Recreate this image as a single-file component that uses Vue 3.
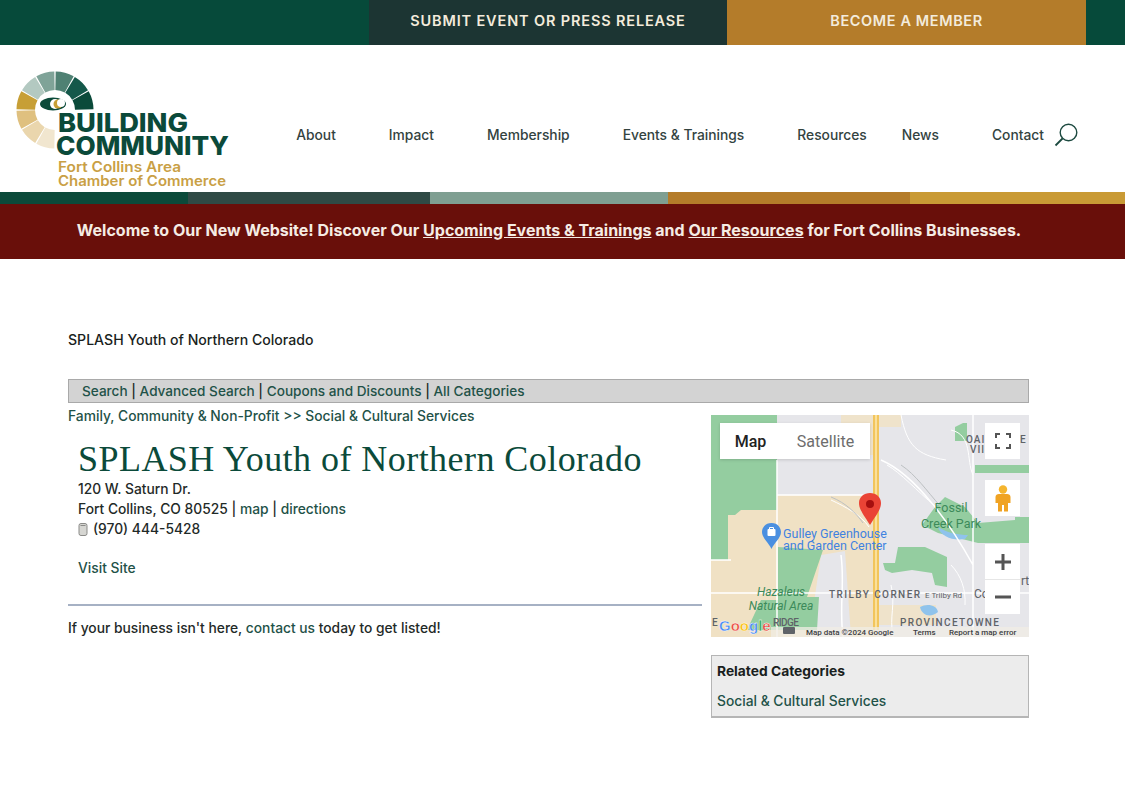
<script setup>
const navItems = [
  { label: 'About' },
  { label: 'Impact' },
  { label: 'Membership' },
  { label: 'Events & Trainings' },
  { label: 'Resources', tight: true },
  { label: 'News' },
  { label: 'Contact', last: true }
]

const stripes = [
  { color: '#0b4a3a', width: 188 },
  { color: '#2f4a45', width: 242 },
  { color: '#7f9f92', width: 238 },
  { color: '#b47c2a', width: 242 },
  { color: '#c99a35', width: 215 }
]

// logo ring, runs counter-clockwise from the right side down to the bottom
const ringColors = ['#0b4a3a', '#14584a', '#4f8173', '#7fa398', '#b3c9c1', '#c79f36', '#dfc07f', '#ead6ad', '#f1e6cf']
const arcPoint = (r, deg) => {
  const a = (deg * Math.PI) / 180
  return `${(55 + r * Math.cos(a)).toFixed(2)} ${(65 - r * Math.sin(a)).toFixed(2)}`
}
const ringSegments = ringColors.map((color, i) => {
  const start = i * 30 + 1
  const end = start + 28
  const d = `M${arcPoint(38.5, start)} A38.5 38.5 0 0 0 ${arcPoint(38.5, end)} L${arcPoint(20, end)} A20 20 0 0 1 ${arcPoint(20, start)} Z`
  return { color, d }
})
</script>

<template>
  <div class="page">
    <div class="top-bar">
      <a class="top-btn dark">SUBMIT EVENT OR PRESS RELEASE</a>
      <a class="top-btn gold">BECOME A MEMBER</a>
    </div>

    <header class="site-header">
      <svg class="logo" width="240" height="147" viewBox="0 0 240 147">
        <path v-for="seg in ringSegments" :key="seg.color" :d="seg.d" :fill="seg.color" />
        <ellipse cx="53" cy="59" rx="13" ry="6.500" fill="#0b4a3a" />
        <circle cx="55" cy="59" r="5" fill="#fff" />
        <circle cx="58" cy="59" r="4.500" fill="#c79f36" />
        <circle cx="61" cy="58" r="4" fill="#fff" />
        <text class="logo-big" x="58" y="87" textLength="130" lengthAdjust="spacingAndGlyphs">BUILDING</text>
        <text class="logo-big" x="56" y="110" textLength="173" lengthAdjust="spacingAndGlyphs">COMMUNITY</text>
        <text class="logo-small" x="58" y="127" textLength="123" lengthAdjust="spacingAndGlyphs">Fort Collins Area</text>
        <text class="logo-small" x="58" y="141" textLength="168" lengthAdjust="spacingAndGlyphs">Chamber of Commerce</text>
      </svg>

      <nav class="main-nav">
        <a
          v-for="item in navItems"
          :key="item.label"
          :class="['nav-link', { tight: item.tight, last: item.last }]"
        >{{ item.label }}</a>
        <svg class="search-icon" width="24" height="24" viewBox="0 0 24 24" fill="none" stroke="#1d4a40">
          <circle cx="14.500" cy="9.500" r="8.300" stroke-width="1.400" />
          <path d="M8.500 15.500 L1.500 22.500" stroke-width="1.800" />
        </svg>
      </nav>
    </header>

    <div class="stripes">
      <span v-for="s in stripes" :key="s.color" :style="{ background: s.color, width: s.width + 'px' }"></span>
    </div>

    <div class="welcome">
      <span>Welcome to Our New Website! Discover Our <u>Upcoming Events &amp; Trainings</u> and <u>Our Resources</u> for Fort Collins Businesses.</span>
    </div>

    <main class="content">
      <p class="page-name">SPLASH Youth of Northern Colorado</p>

      <div class="search-bar">
        <a>Search</a> | <a>Advanced Search</a> | <a>Coupons and Discounts</a> | <a>All Categories</a>
      </div>

      <div class="columns">
        <section class="listing">
          <div class="crumbs"><a>Family, Community &amp; Non-Profit</a> &gt;&gt; <a>Social &amp; Cultural Services</a></div>
          <div class="entry">
            <h1>SPLASH Youth of Northern Colorado</h1>
            <div class="line">120 W. Saturn Dr.</div>
            <div class="line">Fort Collins, CO 80525 | <a>map</a> | <a>directions</a></div>
            <div class="line phone">
              <svg width="10" height="13" viewBox="0 0 10 13">
                <rect x="1" y="0.500" width="8" height="12" rx="2" fill="#d6d6d2" stroke="#8b8b88" />
                <rect x="2.500" y="2" width="5" height="1" fill="#8b8b88" />
              </svg>
              (970) 444-5428
            </div>
            <div class="visit"><a>Visit Site</a></div>
          </div>
          <hr class="divider" />
          <p class="cta">If your business isn't here, <a>contact us</a> today to get listed!</p>
        </section>

        <aside class="side">
          <div class="map">
            <svg class="map-canvas" width="318" height="222" viewBox="0 0 318 222">
              <rect width="318" height="222" fill="#e6e6ea" />
              <path d="M0 95H165V222H0Z" fill="#f0e1c4" />
              <path d="M66 80H165V96H66Z" fill="#f0e1c4" />
              <path d="M130 0H165V40H130Z" fill="#efe3cb" />
              <path d="M168 0H190V12H168Z" fill="#efe3cb" />
              <path d="M168 190H225V210H168Z" fill="#efe3cb" />
              <path d="M110 140L134 136L140 222H98Z" fill="#e6e6ea" />
              <path d="M0 0H66V95H30L24 100H17V145H0Z" fill="#94cda0" />
              <path d="M67 132L112 135L96 182H108L106 215H36L50 185H67Z" fill="#94cda0" />
              <path d="M172 148H184L187 132H214L236 142V172L224 170L221 158L201 155L181 158L174 155Z" fill="#94cda0" />
              <path d="M234 82L254 92L267 108L304 105V128H267L227 118L211 110L224 92Z" fill="#94cda0" />
              <path d="M264 50H318V58H264Z" fill="#94cda0" />
              <path d="M304 102H318V128H304Z" fill="#94cda0" />
              <path d="M244 12L252 8H256V26H244Z" fill="#94cda0" />
              <path d="M227 112C236 118 248 120 257 120L254 124C242 126 230 122 227 112Z" fill="#8fc3ec" />
              <path d="M209 192C216 188 226 190 227 197C220 203 211 201 209 192Z" fill="#8fc3ec" />
              <path d="M66 45V222M66 80H165M0 178H318M170 45C205 60 240 110 262 150M262 0V222M0 145H20M130 140C134 170 128 190 132 222" fill="none" stroke="#fff" stroke-width="1.500" />
              <path d="M190 0C196 30 205 40 235 45M240 15C262 20 255 45 262 60M120 85C135 92 150 100 158 112M176 50C190 58 205 75 225 92M180 170C185 190 178 200 182 222M240 150C250 160 255 175 254 190" fill="none" stroke="#fff" stroke-width="1" />
              <path d="M120 82C135 88 145 98 152 108M190 50C205 60 215 75 230 92" fill="none" stroke="#bcc0c2" stroke-width="1" />
              <path d="M165 0V215" stroke="#f2c55c" stroke-width="6" />
              <path d="M165 0V215" stroke="#fbe09a" stroke-width="2" />
              <text class="map-label park" x="240" y="97" text-anchor="middle">Fossil</text>
              <text class="map-label park" x="240" y="113" text-anchor="middle">Creek Park</text>
              <text class="map-label poi" x="72" y="123">Gulley Greenhouse</text>
              <text class="map-label poi" x="72" y="135">and Garden Center</text>
              <path d="M60.500 108C54 108 51 113 51 117C51 123 58 128 60.500 134C63 128 70 123 70 117C70 113 67 108 60.500 108Z" fill="#4a8fe0" />
              <rect x="56.500" y="114" width="8" height="7" rx="1" fill="#fff" />
              <path d="M58.500 114V112.500H62.500V114" fill="none" stroke="#fff" />
              <text class="map-label nature" x="70" y="181" text-anchor="middle">Hazaleus</text>
              <text class="map-label nature" x="70" y="195" text-anchor="middle">Natural Area</text>
              <text class="map-label area" x="118" y="183" textLength="92">TRILBY CORNER</text>
              <text class="map-label road" x="214" y="183">E Trilby Rd</text>
              <text class="map-label area" x="1" y="211">E</text>
              <text class="map-label area" x="62" y="211" textLength="27">RIDGE</text>
              <text class="map-label area" x="189" y="211" textLength="100">PROVINCETOWNE</text>
              <text class="map-label area" x="255" y="28">OAI</text>
              <text class="map-label area" x="259" y="38">VII</text>
              <text class="map-label area" x="309" y="28">E</text>
              <text class="map-label side-label" x="263" y="183">Co</text>
              <text class="map-label side-label" x="310" y="170">rt</text>
              <path d="M159 110C152 99 148 94 148 88C148 82 153 78 159 78C165 78 170 82 170 88C170 94 166 99 159 110Z" fill="#ea4335" />
              <circle cx="159" cy="89" r="4" fill="#a50e0e" />
              <rect x="60" y="212" width="258" height="10" fill="#f0ece4" opacity="0.75" />
              <text class="google" x="8" y="216"><tspan fill="#4285f4">G</tspan><tspan fill="#ea4335">o</tspan><tspan fill="#fbbc05">o</tspan><tspan fill="#4285f4">g</tspan><tspan fill="#34a853">l</tspan><tspan fill="#ea4335">e</tspan></text>
              <rect x="72" y="212" width="12" height="7" rx="1" fill="#5f6368" />
              <text class="map-fine" x="95" y="220">Map data ©2024 Google</text>
              <text class="map-fine" x="202" y="220">Terms</text>
              <text class="map-fine" x="238" y="220">Report a map error</text>
            </svg>

            <div class="map-types">
              <span class="map-type on">Map</span>
              <span class="map-type">Satellite</span>
            </div>
            <button class="map-btn fullscreen">
              <svg width="16" height="16" viewBox="0 0 16 16" fill="none" stroke="#555" stroke-width="2">
                <path d="M1 5V1H5M11 1H15V5M15 11V15H11M5 15H1V11" />
              </svg>
            </button>
            <button class="map-btn pegman">
              <svg width="16" height="27" viewBox="0 0 16 27">
                <circle cx="8" cy="4.500" r="4.200" fill="#f5b52e" />
                <path d="M4 9H12C14 9 15.500 10 15.500 12V18H13V26.500H9V20H7V26.500H3V18H0.500V12C0.500 10 2 9 4 9Z" fill="#f0a323" />
              </svg>
            </button>
            <div class="zoom-ctrl">
              <button class="zoom-btn">
                <svg width="16" height="16" viewBox="0 0 16 16"><path d="M6.500 0H9.500V6.500H16V9.500H9.500V16H6.500V9.500H0V6.500H6.500Z" fill="#555" /></svg>
              </button>
              <button class="zoom-btn">
                <svg width="16" height="16" viewBox="0 0 16 16"><rect y="6.500" width="16" height="3" fill="#555" /></svg>
              </button>
            </div>
          </div>

          <div class="related">
            <h3>Related Categories</h3>
            <a>Social &amp; Cultural Services</a>
          </div>
        </aside>
      </div>
    </main>
  </div>
</template>

<style>
html, body {
  margin: 0;
  background: #fff;
}
</style>

<style scoped>
.page {
  width: 1125px;
  height: 805px;
  overflow: hidden;
  font-family: Inter, "Liberation Sans", sans-serif;
  font-size: 13.8px;
  font-weight: 500;
  color: #1f2a28;
  background: #fff;
}

a {
  color: #1f5248;
  text-decoration: none;
}

.top-bar {
  height: 45px;
  padding-left: 369px;
  display: flex;
  background: #064a3a;
}

.top-btn {
  width: 358px;
  height: 45px;
  padding-bottom: 4px;
  box-sizing: border-box;
  display: flex;
  align-items: center;
  justify-content: center;
  color: #f3ebdc;
  font-size: 14.5px;
  font-weight: 600;
  letter-spacing: 0.6px;
}

.top-btn.dark { background: #1c3533; letter-spacing: 0.85px; }
.top-btn.gold { background: #b47c2a; width: 359px; }

.site-header {
  height: 147px;
  display: flex;
  justify-content: space-between;
  align-items: center;
}

.logo {
  flex: none;
}

.logo-big {
  font-family: Inter, "Liberation Sans", sans-serif;
  font-size: 26px;
  font-weight: 800;
  fill: #0b4a3a;
}

.logo-small {
  font-family: Inter, "Liberation Sans", sans-serif;
  font-size: 14px;
  font-weight: 600;
  fill: #c99f45;
}

.main-nav {
  display: flex;
  align-items: center;
  padding-right: 47px;
  margin-top: 32px;
}

.nav-link {
  margin-right: 53px;
  font-size: 13.8px;
  color: #33433f;
}

.nav-link.tight { margin-right: 35px; }
.nav-link.last { margin-right: 10px; }

.search-icon {
  flex: none;
}

.stripes {
  display: flex;
  height: 12px;
}

.welcome {
  height: 55px;
  padding: 0 27px 4px 0;
  box-sizing: border-box;
  display: flex;
  align-items: center;
  justify-content: center;
  background: #690f0a;
  color: #f5ece4;
  font-size: 16px;
  font-weight: 700;
}

.content {
  padding: 72px 96px 0 68px;
}

.page-name {
  margin: 0 0 30px;
  font-size: 14.1px;
  line-height: 18px;
  color: #1a1f1e;
}

.search-bar {
  height: 24px;
  line-height: 23px;
  padding-left: 13px;
  box-sizing: border-box;
  background: #d3d3d3;
  border: 1px solid #a9a9a9;
  font-size: 13.6px;
}

.columns {
  display: flex;
  justify-content: space-between;
}

.listing {
  width: 634px;
}

.crumbs {
  margin-top: 4px;
  line-height: 18px;
  color: #1f5248;
}

.entry {
  padding: 14px 0 0 10px;
}

h1 {
  margin: 0;
  font-family: "Liberation Serif", serif;
  font-size: 36px;
  line-height: 40px;
  font-weight: 400;
  letter-spacing: 0.45px;
  color: #0b4a3a;
}

.line {
  line-height: 20px;
}

.phone {
  display: flex;
  align-items: center;
  gap: 5px;
}

.visit {
  margin-top: 19px;
  line-height: 20px;
}

.divider {
  margin: 26px 0 0;
  border: 0;
  height: 2px;
  background: #a6b1c4;
}

.cta {
  margin: 13px 0 0;
  line-height: 18px;
}

.side {
  width: 318px;
  margin-top: 12px;
}

.map {
  position: relative;
  width: 318px;
  height: 222px;
  overflow: hidden;
}

.map-canvas {
  display: block;
}

.map-label {
  font-family: Roboto, sans-serif;
  font-weight: 400;
}

.park { font-size: 12.5px; fill: #3c8a5a; }
.poi { font-size: 12.5px; fill: #3f82e0; }
.nature { font-size: 12px; font-style: italic; fill: #3c8a5a; }
.area { font-size: 10px; letter-spacing: 1px; fill: #5f6368; font-weight: 500; }
.road { font-size: 8px; fill: #5f6368; }
.side-label { font-size: 12px; fill: #5f6368; }

.google {
  font-family: "Liberation Sans", sans-serif;
  font-size: 15px;
  font-weight: 700;
  stroke: #fff;
  stroke-width: 0.4px;
}

.map-fine {
  font-family: Roboto, sans-serif;
  font-size: 8px;
  fill: #3c4043;
}

.map-types {
  position: absolute;
  left: 9px;
  top: 8px;
  height: 36px;
  display: flex;
  background: #fff;
  box-shadow: 0 1px 3px rgba(0, 0, 0, 0.15);
  font-family: Roboto, sans-serif;
  font-size: 16px;
}

.map-type {
  display: flex;
  align-items: center;
  justify-content: center;
  width: 61px;
  color: #6d6d6d;
  font-weight: 400;
}

.map-type + .map-type { width: 89px; }
.map-type.on { color: #222; font-weight: 500; }

.map-btn, .zoom-btn {
  display: flex;
  align-items: center;
  justify-content: center;
  padding: 0;
  border: 0;
  background: #fff;
}

.map-btn {
  position: absolute;
  right: 9px;
  width: 35px;
  height: 36px;
}

.fullscreen { top: 8px; }
.pegman { top: 65px; }

.zoom-ctrl {
  position: absolute;
  right: 9px;
  top: 129px;
  width: 35px;
  background: #fff;
}

.zoom-btn {
  width: 35px;
  height: 35px;
}

.zoom-btn + .zoom-btn {
  border-top: 1px solid #e6e6e6;
}

.related {
  margin-top: 18px;
  height: 63px;
  box-sizing: border-box;
  padding: 6px 5px;
  background: #ececec;
  border: 1px solid #b5b5b5;
  border-bottom-width: 2px;
}

.related h3 {
  margin: 0 0 13px;
  font-size: 13.8px;
  line-height: 18px;
  font-weight: 700;
  color: #1a1f1e;
}
</style>
